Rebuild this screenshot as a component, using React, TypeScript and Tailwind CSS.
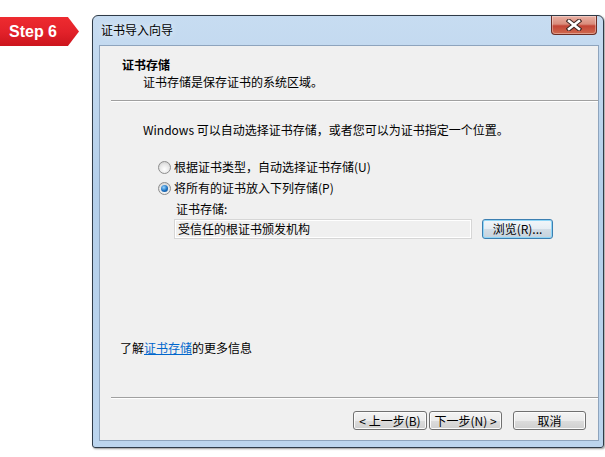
import React from "react";

const cjk = "font-['Noto_Sans_CJK_SC',sans-serif]";

const Radio = ({ checked }: { checked?: boolean }) => (
  <span className="flex h-[13px] w-[13px] shrink-0 items-center justify-center rounded-full border border-[#8d8d8d] bg-[radial-gradient(circle_at_50%_65%,#ffffff_0%,#e6e6e6_55%,#c4c4c4_100%)]">
    {checked && (
      <span className="h-[7px] w-[7px] rounded-full bg-[radial-gradient(circle_at_40%_35%,#9ad6ff_0%,#1a6fbf_55%,#0c4383_100%)]" />
    )}
  </span>
);

const NavButton = ({
  children,
  className = "",
}: {
  children: React.ReactNode;
  className?: string;
}) => (
  <button
    className={`flex h-[19px] items-center justify-center rounded-[3px] border border-[#707070] bg-[linear-gradient(180deg,#f4f4f4_0%,#ebebeb_50%,#dddddd_50%,#cfcfcf_100%)] text-[12px] leading-none text-black shadow-[inset_0_0_0_1px_#fbfbfb] ${className}`}
  >
    {children}
  </button>
);

// etched divider line, gray over white
const Divider = () => (
  <div className="ml-[11px] border-t border-b border-t-[#a0a0a0] border-b-white" />
);

const StepBadge = () => (
  <div className="mt-[2px] flex h-[29px] w-[79px] items-center bg-[linear-gradient(180deg,#ee2b30_0%,#e3222a_50%,#cc151d_100%)] pl-[9px] [clip-path:polygon(0_0,86%_0,100%_50%,86%_100%,0_100%)]">
    <span className="font-['Liberation_Sans',Arial,sans-serif] text-[16px] leading-none font-bold text-white">
      Step 6
    </span>
  </div>
);

const CloseButton = () => (
  <div className="flex h-[19px] w-[46px] items-center justify-center rounded-b-[4px] border border-t-0 border-[#6b2d24] bg-[linear-gradient(180deg,#eab0a3_0%,#d98c7c_45%,#c44536_55%,#cf6a4f_100%)] shadow-[inset_0_0_0_1px_rgba(255,255,255,0.35)]">
    <svg width="16" height="12" viewBox="0 0 16 12">
      <path d="M3 2 L13 10 M13 2 L3 10" stroke="#3b2422" strokeWidth="4.6" strokeLinecap="square" />
      <path d="M3 2 L13 10 M13 2 L3 10" stroke="#ffffff" strokeWidth="2.6" strokeLinecap="square" />
    </svg>
  </div>
);

const App = () => {
  return (
    <div className={`flex h-[457px] w-[605px] items-start overflow-hidden bg-white pt-[15px] ${cjk}`}>
      <StepBadge />

      {/* wizard window */}
      <div className="ml-[13px] flex h-[433px] w-[512px] shrink-0 flex-col rounded-t-[6px] rounded-b-[3px] border border-[#2f3b48] bg-[linear-gradient(180deg,#c7dcf1_0%,#b4cfea_40%,#bcd5ee_100%)] pr-[4px] pb-[6px] pl-[6px] shadow-[1px_1px_2px_rgba(0,0,0,0.4)]">
        {/* title bar */}
        <div className="flex h-[29px] items-start justify-between">
          <span className="mt-[6px] ml-[2px] text-[12px] leading-[16px] text-black [text-shadow:0_0_6px_#ffffff]">
            证书导入向导
          </span>
          <div className="mr-[2px]">
            <CloseButton />
          </div>
        </div>

        {/* client area */}
        <div className="flex h-[396px] flex-col border border-[#8ea4bd] bg-[#f0f0f0] text-[12px] leading-[16px] text-black">
          <div className="pt-[11px] pl-[22px] font-bold">证书存储</div>
          <div className="mt-[1px] pl-[43px]">证书存储是保存证书的系统区域。</div>
          <div className="mt-[10px]">
            <Divider />
          </div>

          <div className="mt-[20px] pl-[43px]">
            Windows 可以自动选择证书存储，或者您可以为证书指定一个位置。
          </div>

          <div className="mt-[21px] flex items-center gap-[3px] pl-[58px]">
            <Radio />
            <span>根据证书类型，自动选择证书存储(U)</span>
          </div>
          <div className="mt-[5px] flex items-center gap-[3px] pl-[58px]">
            <Radio checked />
            <span>将所有的证书放入下列存储(P)</span>
          </div>

          <div className="mt-[5px] pl-[76px]">证书存储:</div>
          <div className="mt-[2px] flex items-center gap-[10px] pl-[74px]">
            <div className="flex h-[20px] w-[298px] items-center border border-[#d6d6d6] bg-[#f0f0f0] pl-[3px] shadow-[inset_0_0_0_1px_#ffffff]">
              受信任的根证书颁发机构
            </div>
            <button className="flex h-[20px] w-[71px] items-center justify-center rounded-[3px] border border-[#3c7fb1] bg-[linear-gradient(180deg,#f2f6f9_0%,#e6edf3_50%,#d3dde6_50%,#c6d2dc_100%)] text-[12px] leading-none shadow-[inset_0_0_0_1px_#8fd6f7]">
              浏览(R)...
            </button>
          </div>

          <div className="flex-1" />

          <div className="pl-[20px]">
            了解<span className="text-[#0066cc] underline">证书存储</span>的更多信息
          </div>
          <div className="mt-[41px]">
            <Divider />
          </div>

          <div className="mt-[12px] flex justify-end pr-[12px] pb-[10px]">
            <NavButton className="w-[74px]">&lt; 上一步(B)</NavButton>
            <NavButton className="ml-[2px] w-[73px]">下一步(N) &gt;</NavButton>
            <NavButton className="ml-[11px] w-[73px]">取消</NavButton>
          </div>
        </div>
      </div>
    </div>
  );
};

export default App;
